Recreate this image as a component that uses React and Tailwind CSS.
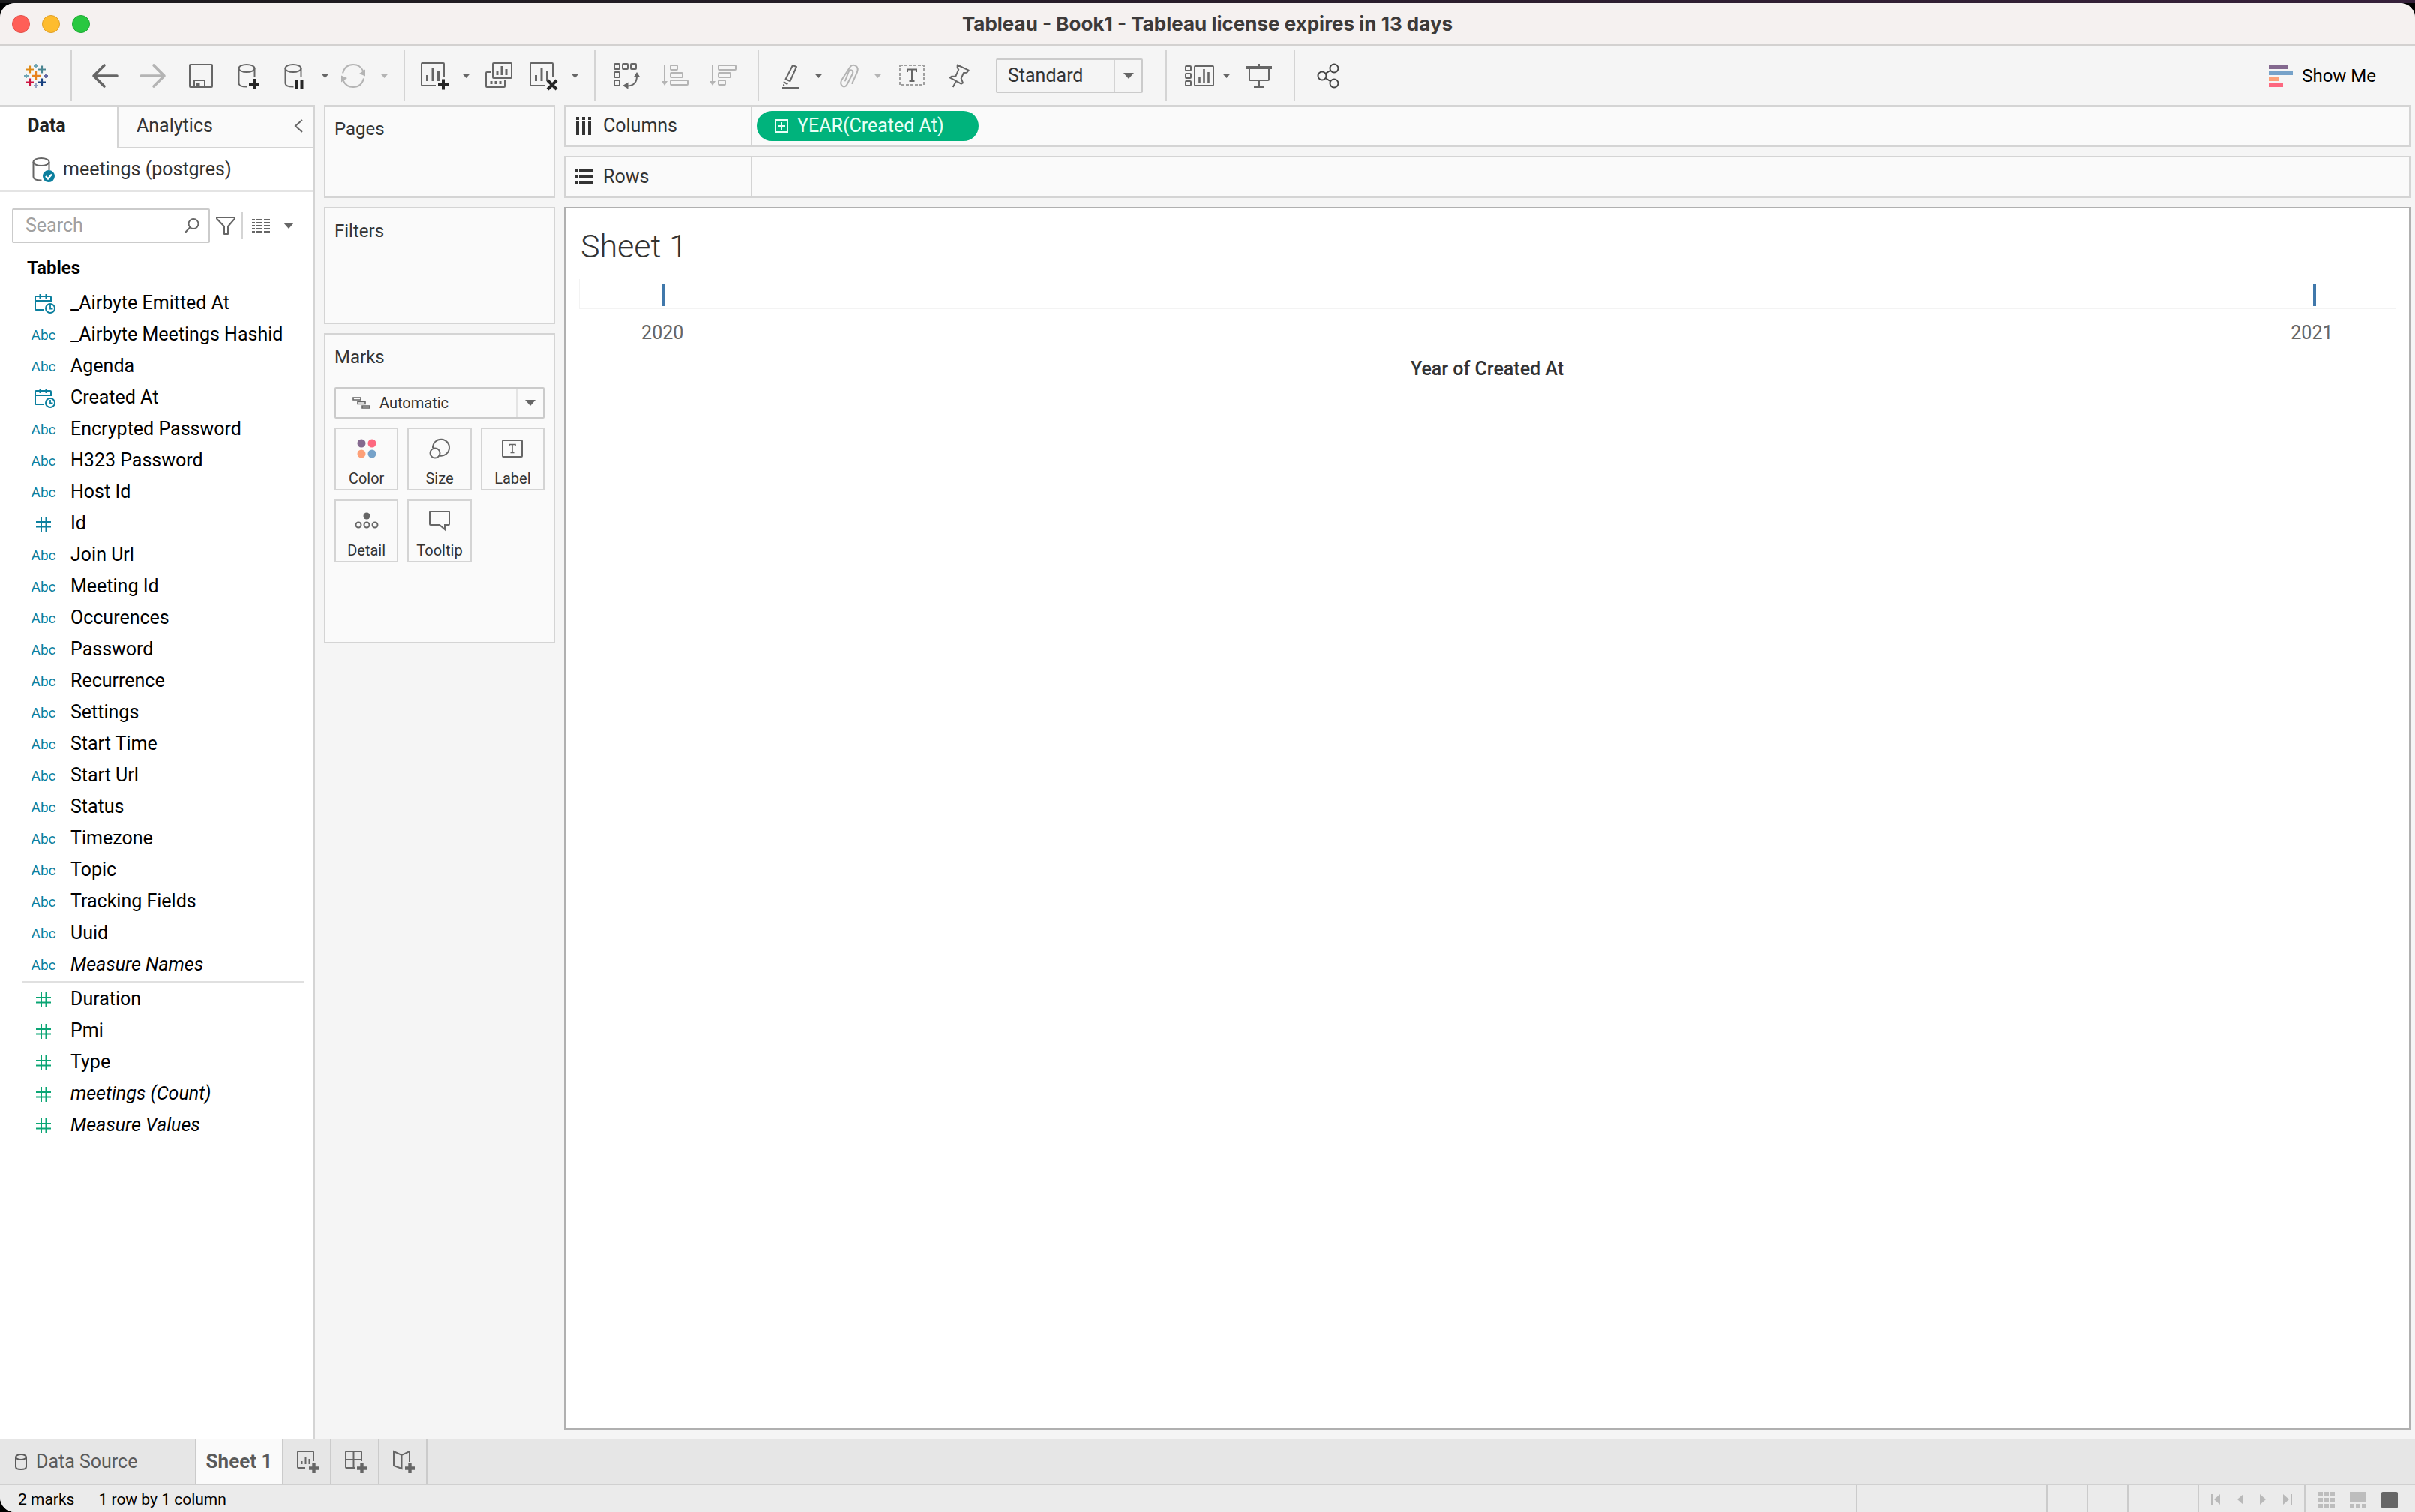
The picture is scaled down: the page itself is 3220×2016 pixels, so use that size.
import React from 'react';

const DIMENSIONS = [
  { name: '_Airbyte Emitted At', type: 'date' },
  { name: '_Airbyte Meetings Hashid', type: 'text' },
  { name: 'Agenda', type: 'text' },
  { name: 'Created At', type: 'date' },
  { name: 'Encrypted Password', type: 'text' },
  { name: 'H323 Password', type: 'text' },
  { name: 'Host Id', type: 'text' },
  { name: 'Id', type: 'number' },
  { name: 'Join Url', type: 'text' },
  { name: 'Meeting Id', type: 'text' },
  { name: 'Occurences', type: 'text' },
  { name: 'Password', type: 'text' },
  { name: 'Recurrence', type: 'text' },
  { name: 'Settings', type: 'text' },
  { name: 'Start Time', type: 'text' },
  { name: 'Start Url', type: 'text' },
  { name: 'Status', type: 'text' },
  { name: 'Timezone', type: 'text' },
  { name: 'Topic', type: 'text' },
  { name: 'Tracking Fields', type: 'text' },
  { name: 'Uuid', type: 'text' },
  { name: 'Measure Names', type: 'text', generated: true },
];

const MEASURES = [
  { name: 'Duration', type: 'number' },
  { name: 'Pmi', type: 'number' },
  { name: 'Type', type: 'number' },
  { name: 'meetings (Count)', type: 'number', generated: true },
  { name: 'Measure Values', type: 'number', generated: true },
];

const POINTS = [
  { year: 2020, position: 4.6 },
  { year: 2021, position: 95.55 },
];

/* ---------- icons ---------- */

const Icon = ({ children, className = 'w-9 h-9', box = '0 0 36 36' }) => (
  <svg
    viewBox={box}
    className={`shrink-0 overflow-visible ${className}`}
    fill="none"
    stroke="currentColor"
    strokeWidth="2"
    aria-hidden="true"
  >
    {children}
  </svg>
);

const Caret = ({ className = 'w-[11px] h-1.5' }) => (
  <svg viewBox="0 0 14 8" className={`shrink-0 ${className}`} fill="currentColor" aria-hidden="true">
    <path d="M0 0h14L7 8z" />
  </svg>
);

const LogoIcon = () => (
  <Icon>
    <path stroke="#e8821e" strokeWidth="2.4" d="M18 12v12M12 18h12" />
    <path stroke="#dd8a17" strokeWidth="2.2" d="M10 4.5v10M5 9.5h10" />
    <path stroke="#4a8591" strokeWidth="2.2" d="M26 4.5v10M21 9.5h10" />
    <path stroke="#cc1542" strokeWidth="2.2" d="M10 21.5v10M5 26.5h10" />
    <path stroke="#17407f" strokeWidth="2.2" d="M26 21.5v10M21 26.5h10" />
    <path stroke="#6fa6b4" strokeWidth="1.8" d="M18 2v6M15 5h6M5 15v6M2 18h6" />
    <path stroke="#6468a4" strokeWidth="1.8" d="M31 15v6M28 18h6" />
    <path stroke="#8d9bc0" strokeWidth="1.8" d="M18 28v6M15 31h6" />
  </Icon>
);

const BackIcon = () => (
  <Icon>
    <path strokeWidth="3.6" strokeLinecap="round" strokeLinejoin="round" d="M17 4L3 18l14 14M3.5 18H34" />
  </Icon>
);

const ForwardIcon = () => (
  <Icon>
    <path strokeWidth="3.6" strokeLinecap="round" strokeLinejoin="round" d="M19 4l14 14-14 14M32.5 18H2" />
  </Icon>
);

const SaveIcon = () => (
  <Icon>
    <rect x="3" y="3" width="30" height="30" rx="1" />
    <path d="M9 33V24h14v9" />
    <rect x="12" y="27" width="4.5" height="6" fill="currentColor" stroke="none" />
  </Icon>
);

const Cylinder = () => (
  <>
    <ellipse cx="15" cy="8" rx="10.5" ry="5" />
    <path d="M4.5 8v20c0 3 4 4.6 11 4.6M25.5 8v11" />
  </>
);

const DatabaseAddIcon = () => (
  <Icon>
    <Cylinder />
    <path stroke="#262626" strokeWidth="4" d="M25 22v14M18 29h14" />
  </Icon>
);

const DatabasePauseIcon = () => (
  <Icon>
    <g transform="translate(-2 0)">
      <Cylinder />
    </g>
    <path stroke="#262626" strokeWidth="4" d="M18 23v13M24.5 23v13" />
  </Icon>
);

const RefreshIcon = () => (
  <Icon>
    <path d="M4 14.5C6 7 11 3 18 3c6 0 11 3.5 13.5 9M32 21.5C30 29 25 33 18 33c-6 0-11-3.5-13.5-9" />
    <path fill="currentColor" stroke="none" d="M34 9.5v9l-8-3.5zM2 26.5v-9l8 3.5z" />
  </Icon>
);

const SheetBars = () => (
  <>
    <path strokeWidth="3" d="M9.5 17v8M17 7v18M24.5 11v14" />
    <path d="M21 31H3a1 1 0 0 1-1-1V2a1 1 0 0 1 1-1h28a1 1 0 0 1 1 1v17" />
  </>
);

const NewSheetIcon = () => (
  <Icon>
    <SheetBars />
    <path stroke="#262626" strokeWidth="4" d="M31 22.5v14M24 29.5h14" />
  </Icon>
);

const DuplicateIcon = () => (
  <Icon>
    <rect x="10" y="1" width="25" height="20" rx="1" />
    <path strokeWidth="3" d="M16 11v6M22 5v12M28 9v8M8 25v4M14 25v4M20 25v4" />
    <path d="M7 13H2a1 1 0 0 0-1 1v18a1 1 0 0 0 1 1h23a1 1 0 0 0 1-1v-8" />
  </Icon>
);

const ClearSheetIcon = () => (
  <Icon>
    <SheetBars />
    <path stroke="#262626" strokeWidth="4" d="M25 24l12 12M37 24L25 36" />
  </Icon>
);

const SwapIcon = () => (
  <Icon>
    <rect x="1" y="2" width="7" height="7" rx="1" />
    <rect x="12" y="2" width="7" height="7" rx="1" />
    <rect x="23" y="2" width="7" height="7" rx="1" />
    <rect x="1" y="13" width="7" height="7" rx="1" />
    <rect x="1" y="24" width="7" height="7" rx="1" />
    <path d="M31 18c0 8-4 13-12 13.5" />
    <path fill="currentColor" stroke="none" d="M31 13l4.5 7h-9zM12 31l7.5-4.5v9z" />
  </Icon>
);

const SortAscIcon = () => (
  <Icon>
    <path d="M4 3v23" />
    <path fill="currentColor" stroke="none" d="M0 25h8l-4 6z" />
    <rect x="12" y="4" width="9" height="6" rx="1" />
    <rect x="12" y="14" width="16" height="6" rx="1" />
    <rect x="12" y="24" width="23" height="6" rx="1" />
  </Icon>
);

const SortDescIcon = () => (
  <Icon>
    <path d="M4 3v23" />
    <path fill="currentColor" stroke="none" d="M0 25h8l-4 6z" />
    <rect x="12" y="4" width="23" height="6" rx="1" />
    <rect x="12" y="14" width="16" height="6" rx="1" />
    <rect x="12" y="24" width="9" height="6" rx="1" />
  </Icon>
);

const HighlightIcon = () => (
  <Icon>
    <path strokeLinejoin="round" d="M19 4l5 2-8.500 19-6-2.500z" />
    <path fill="currentColor" stroke="none" d="M7 25l6 3.500-1.500 1.500-5-3zM6 29l3.500 2.500H6z" />
    <path strokeWidth="3" d="M5 34.5h22" />
  </Icon>
);

const ClipIcon = () => (
  <Icon>
    <path
      strokeLinecap="round"
      d="M19.3 28L26 13c3-8-6-13-10-6L5 24c-3 8 5 11 7.500 5.500L20 15c1.500-5-4-6.500-5.500-2L10 24.500"
    />
  </Icon>
);

const TextBoxIcon = () => (
  <Icon>
    <rect x="2" y="4" width="32" height="26" strokeDasharray="4 2" stroke="#a0a0a0" />
    <path d="M12 13V9.500h12V13M18 9.500v15M14.500 25h7" />
  </Icon>
);

const PinIcon = () => (
  <Icon>
    <path
      strokeLinejoin="round"
      d="M14.7 3.500l15 7.200-2.400 3-4.300.3-3.300 7.300 2.300 6-2.300 1.400-15-8.400 2.600-1.600h5l4-9-1.600-2.400zM13 25l-4.300 8"
    />
  </Icon>
);

const CardsIcon = () => (
  <Icon className="w-10 h-9" box="0 0 40 36">
    <rect x="1" y="5" width="7" height="6" rx="1" />
    <rect x="1" y="15" width="7" height="6" rx="1" />
    <rect x="1" y="25" width="7" height="6" rx="1" />
    <rect x="13" y="5" width="25" height="26" rx="1" />
    <path strokeWidth="2.6" d="M19.5 19v8M25.5 9v18M31.5 13v14" />
  </Icon>
);

const PresentIcon = () => (
  <Icon>
    <path strokeWidth="4" d="M1 7h34" />
    <path d="M18 2v4M5 8v15a1 1 0 0 0 1 1h24a1 1 0 0 0 1-1V8M18 24v9M11 33h14" />
  </Icon>
);

const ShareIcon = () => (
  <Icon>
    <g stroke="#444">
      <circle cx="10" cy="18" r="5.5" />
      <circle cx="26" cy="8" r="5.5" />
      <circle cx="26" cy="28" r="5.5" />
      <path d="M14.5 15l7-4.500M14.5 21l7 4.500" />
    </g>
  </Icon>
);

const ShowMeIcon = () => (
  <Icon className="w-8 h-[30px]" box="0 0 32 30">
    <g stroke="none">
      <path fill="#84698f" d="M0 0h25v6H0z" />
      <path fill="#76a2c9" d="M0 8h32v6H0z" />
      <path fill="#fda078" d="M0 16h13v6H0z" />
      <path fill="#fd6880" d="M0 24h19v6H0z" />
    </g>
  </Icon>
);

const DateIcon = () => (
  <Icon className="mt-1 ml-1 w-7 h-7" box="0 0 28 28">
    <path d="M12 21H2a1 1 0 0 1-1-1V4a1 1 0 0 1 1-1h19a1 1 0 0 1 1 1v5H1M7.5 0v6M15.5 0v6" />
    <circle cx="21" cy="19" r="6" />
    <path strokeWidth="1.8" d="M21 15v4.500h3.500" />
  </Icon>
);

const NumberIcon = () => (
  <Icon className="mt-0.5 w-5 h-5" box="0 0 20 20">
    <path d="M7 0v20M13.5 0v20M0 7h20M0 13.5h20" />
  </Icon>
);

const FieldIcon = ({ type }) => {
  if (type === 'date') return <DateIcon />;
  if (type === 'number') return <NumberIcon />;
  return <span className="mt-0.5 text-[19px]">Abc</span>;
};

/* ---------- shared pieces ---------- */

const Tool = ({ label, children, className = '', faded }) => (
  <button
    type="button"
    aria-label={label}
    className={`flex shrink-0 items-center ${faded ? 'text-[#b4b4b4]' : 'text-[#666]'} ${className}`}
  >
    {children}
  </button>
);

const Group = ({ children }) => (
  <div className="flex shrink-0 items-center border-r-2 border-[#d4d4d4]">{children}</div>
);

const Card = ({ title, children, className }) => (
  <section className={`border-2 border-[#d4d4d4] bg-[#fafafa] px-3 pt-3 ${className}`}>
    <h2 className="text-[24px] leading-9 text-[#333]">{title}</h2>
    {children}
  </section>
);

const TitleBar = () => (
  <header className="flex h-[57px] items-center border-b-2 border-[#d3d1d0] bg-[#f5f1f0] px-4">
    <div className="flex w-40 gap-4">
      <button type="button" aria-label="Close" className="h-6 w-6 rounded-full border border-[#e2514b] bg-[#ff5f57]" />
      <button type="button" aria-label="Minimize" className="h-6 w-6 rounded-full border border-[#e0a029] bg-[#febc2e]" />
      <button type="button" aria-label="Zoom" className="h-6 w-6 rounded-full border border-[#1faa35] bg-[#28c840]" />
    </div>
    <h1 className="flex-1 text-center font-[Inter,sans-serif] text-[26px] font-bold text-[#3d3a39]">
      Tableau - Book1 - Tableau license expires in 13 days
    </h1>
    <div className="w-40" />
  </header>
);

const Toolbar = () => (
  <nav className="flex h-[79px] py-1.5">
    <Group>
      <Tool label="Start page" className="ml-7.5 mr-7"><LogoIcon /></Tool>
    </Group>
    <Group>
      <Tool label="Undo" className="ml-6.5"><BackIcon /></Tool>
      <Tool label="Redo" className="ml-7" faded><ForwardIcon /></Tool>
      <Tool label="Save" className="ml-7"><SaveIcon /></Tool>
      <Tool label="New data source" className="ml-7"><DatabaseAddIcon /></Tool>
      <Tool label="Pause updates" className="ml-7"><DatabasePauseIcon /></Tool>
      <Tool label="Update options" className="ml-3.5"><Caret /></Tool>
      <Tool label="Run update" className="ml-3.5" faded><RefreshIcon /></Tool>
      <Tool label="Run options" className="ml-4.5 mr-5" faded><Caret /></Tool>
    </Group>
    <Group>
      <Tool label="New worksheet" className="ml-5"><NewSheetIcon /></Tool>
      <Tool label="New options" className="ml-5"><Caret /></Tool>
      <Tool label="Duplicate" className="ml-5"><DuplicateIcon /></Tool>
      <Tool label="Clear sheet" className="ml-5.5"><ClearSheetIcon /></Tool>
      <Tool label="Clear options" className="ml-5 mr-5"><Caret /></Tool>
    </Group>
    <Group>
      <Tool label="Swap rows and columns" className="ml-6"><SwapIcon /></Tool>
      <Tool label="Sort ascending" className="ml-7" faded><SortAscIcon /></Tool>
      <Tool label="Sort descending" className="ml-7 mr-7" faded><SortDescIcon /></Tool>
    </Group>
    <Group>
      <Tool label="Highlight" className="ml-6.5"><HighlightIcon /></Tool>
      <Tool label="Highlight options" className="ml-3"><Caret /></Tool>
      <Tool label="Group members" className="ml-5" faded><ClipIcon /></Tool>
      <Tool label="Group options" className="ml-3" faded><Caret /></Tool>
      <Tool label="Show mark labels" className="ml-5.5"><TextBoxIcon /></Tool>
      <Tool label="Fix axes" className="ml-7"><PinIcon /></Tool>
      <div className="ml-7.5 mr-7.5 flex h-[46px] w-[196px] rounded-xs border-2 border-[#cbcbcb] text-[#666]">
        <select aria-label="Fit" className="min-w-0 flex-1 appearance-none pl-3.5 text-[25px] text-[#333]">
          <option>Standard</option>
        </select>
        <span className="flex w-9 items-center justify-center border-l border-[#d4d4d4]">
          <Caret className="w-3.5 h-2" />
        </span>
      </div>
    </Group>
    <Group>
      <Tool label="Show cards" className="ml-6"><CardsIcon /></Tool>
      <Tool label="Card options" className="ml-2.5"><Caret /></Tool>
      <Tool label="Presentation mode" className="ml-5 mr-7"><PresentIcon /></Tool>
    </Group>
    <Tool label="Share" className="ml-6.5"><ShareIcon /></Tool>
    <button type="button" className="ml-auto mr-[52px] flex items-center gap-3 text-[24px] text-black">
      <ShowMeIcon />
      Show Me
    </button>
  </nav>
);

const FieldRow = ({ field, color }) => (
  <li className="flex h-[42px] items-center">
    <span className={`flex w-8 justify-center ${color}`}>
      <FieldIcon type={field.type} />
    </span>
    <span className={`ml-5 text-[25px] whitespace-nowrap text-black ${field.generated ? 'italic' : ''}`}>
      {field.name}
    </span>
  </li>
);

const DataPane = () => (
  <aside className="w-[420px] shrink-0 border-t-2 border-r-2 border-[#d4d4d4] bg-white">
    <div className="flex h-14">
      <button type="button" className="w-[156px] pr-8 pb-1 text-center text-[25px] font-bold text-[#222]">Data</button>
      <div className="flex flex-1 items-center justify-between border-b-2 border-l-2 border-[#d4d4d4] bg-[#fafafa] pr-3.5 pb-0.5 pl-6">
        <button type="button" className="text-[25px] text-[#333]">Analytics</button>
        <button type="button" aria-label="Collapse pane" className="text-[#666]">
          <Icon className="w-3 h-[18px]" box="0 0 12 18"><path d="M11 1L2 9l9 8" /></Icon>
        </button>
      </div>
    </div>

    <button type="button" className="flex h-[58px] w-full items-center gap-2 border-b-2 border-[#e4e4e4] pl-10 text-[25px] text-[#333]">
      <span className="text-[#666]">
        <Icon>
          <Cylinder />
          <circle cx="25" cy="27" r="8" fill="#0b7f9e" stroke="none" />
          <path stroke="#fff" strokeWidth="2.4" d="M21 27l3 3.500 5-6" />
        </Icon>
      </span>
      meetings (postgres)
    </button>

    <div className="mt-[22px] flex items-center pl-4 text-[#666]">
      <label className="flex h-[46px] w-[264px] items-center rounded-xs border-2 border-[#cbcbcb] pr-3 pl-4">
        <input
          type="text"
          aria-label="Search"
          placeholder="Search"
          className="min-w-0 flex-1 text-[25px] placeholder:text-[#a0a0a0] focus:outline-none"
        />
        <Icon className="w-5 h-5" box="0 0 20 20">
          <circle cx="12" cy="7.5" r="6.5" />
          <path d="M7.5 12L1 19" />
        </Icon>
      </label>
      <button type="button" aria-label="Filter fields" className="ml-2">
        <Icon className="w-[26px] h-6" box="0 0 26 24">
          <path strokeLinejoin="round" d="M1 1h24v1.500L16 13v10h-5V13L1 2.500z" />
        </Icon>
      </button>
      <span className="ml-2 h-9 border-l-2 border-[#d4d4d4]" />
      <button type="button" aria-label="View as" className="ml-3 flex items-center gap-[18px]">
        <Icon className="w-6 h-5" box="0 0 24 20">
          <path d="M0 2h4M6 2h8M16 2h8M0 6h4M6 6h8M16 6h8M0 10h4M6 10h8M16 10h8M0 14h4M6 14h8M16 14h8M0 18h4M6 18h8M16 18h8" />
        </Icon>
        <Caret className="w-3.5 h-2" />
      </button>
    </div>

    <h2 className="mt-[17px] pl-9 text-[24px] leading-8 font-bold text-black">Tables</h2>
    <ul className="mt-2.5 pl-[42px]">
      {DIMENSIONS.map((field) => (
        <FieldRow key={field.name} field={field} color="text-[#0b7f9e]" />
      ))}
    </ul>
    <hr className="my-px mr-3 ml-[30px] border-t-2 border-[#e0e0e0]" />
    <ul className="pl-[42px]">
      {MEASURES.map((field) => (
        <FieldRow key={field.name} field={field} color="text-[#0aa574]" />
      ))}
    </ul>
  </aside>
);

const MarkButton = ({ label, children }) => (
  <button
    type="button"
    className="flex h-[84px] flex-col items-center justify-between border-2 border-[#d4d4d4] pt-3 pb-0.5 text-[#666]"
  >
    {children}
    <span className="text-[20px] leading-6 text-[#333]">{label}</span>
  </button>
);

const MarksCard = () => (
  <Card title="Marks" className="h-[414px]">
    <div className="mt-[22px] flex h-[42px] items-center rounded-xs border-2 border-[#cbcbcb] text-[#666]">
      <Icon className="ml-[22px] w-6 h-4" box="0 0 24 16">
        <path strokeWidth="1.6" d="M1 1h10v3H1zM7 6.500h10v3H7zM13 12h10v3H13z" />
      </Icon>
      <select aria-label="Mark type" className="min-w-0 flex-1 appearance-none pl-3 text-[20px] text-[#333]">
        <option>Automatic</option>
      </select>
      <span className="flex w-9 items-center justify-center self-stretch border-l-2 border-[#e4e4e4]">
        <Caret className="w-3.5 h-2" />
      </span>
    </div>
    <div className="mt-3 grid grid-cols-3 gap-3">
      <MarkButton label="Color">
        <Icon className="w-7 h-7" box="0 0 28 28">
          <g stroke="none">
            <circle cx="7" cy="7" r="5.5" fill="#84698f" />
            <circle cx="21" cy="7" r="5.5" fill="#fd6880" />
            <circle cx="7" cy="21" r="5.5" fill="#fda078" />
            <circle cx="21" cy="21" r="5.5" fill="#76a2c9" />
          </g>
        </Icon>
      </MarkButton>
      <MarkButton label="Size">
        <Icon className="w-7 h-7" box="0 0 28 28">
          <path d="M5 13A11 11 0 1 1 14 23.500" />
          <circle cx="8" cy="20" r="6.5" />
        </Icon>
      </MarkButton>
      <MarkButton label="Label">
        <Icon className="w-7 h-7" box="0 0 28 28">
          <rect x="1" y="3" width="26" height="22" rx="1" />
          <path strokeWidth="1.6" d="M10 11V8.500h8V11M14 8.500v11M11.500 19.500h5" />
        </Icon>
      </MarkButton>
      <MarkButton label="Detail">
        <Icon className="w-8 h-7" box="0 0 32 28">
          <circle cx="16" cy="8" r="4.5" fill="currentColor" stroke="none" />
          <circle cx="5" cy="20" r="3.5" />
          <circle cx="16" cy="20" r="3.5" />
          <circle cx="27" cy="20" r="3.5" />
        </Icon>
      </MarkButton>
      <MarkButton label="Tooltip">
        <Icon className="w-7 h-7" box="0 0 28 28">
          <path d="M2 2h24a1 1 0 0 1 1 1v16a1 1 0 0 1-1 1h-5v6l-7-6H2a1 1 0 0 1-1-1V3a1 1 0 0 1 1-1z" />
        </Icon>
      </MarkButton>
    </div>
  </Card>
);

const Shelf = ({ label, icon, children }) => (
  <div className="flex h-14 border-2 border-[#d4d4d4] bg-[#fafafa]">
    <div className="flex w-[249px] items-center gap-3.5 border-r-2 border-[#d4d4d4] pl-3 text-[25px] text-[#333]">
      {icon}
      {label}
    </div>
    <div className="flex flex-1 items-center pl-1.5">{children}</div>
  </div>
);

const Worksheet = () => (
  <section className="flex-1 border-2 border-[#b0b0b0] bg-white px-[18px] pt-6">
    <h2 className="pl-0.5 text-[43px] leading-[52px] font-light text-[#333]">Sheet 1</h2>
    <div className="relative mt-4.5 h-10 border-b-2 border-l border-[#f3f3f3]">
      {POINTS.map((point) => (
        <span
          key={point.year}
          className="absolute top-1.5 h-[30px] w-1 -translate-x-1/2 bg-[#4078ab]"
          style={{ left: `${point.position}%` }}
        />
      ))}
    </div>
    <div className="relative mt-4 mr-1 h-8">
      {POINTS.map((point) => (
        <span
          key={point.year}
          className="absolute -translate-x-1/2 text-[25px] leading-8 text-[#666]"
          style={{ left: `${point.position}%` }}
        >
          {point.year}
        </span>
      ))}
    </div>
    <p className="mt-4 text-center text-[25px] leading-8 font-medium text-[#333]">Year of Created At</p>
  </section>
);

const SheetTabs = () => (
  <div className="flex h-[62px] border-t border-b-2 border-t-[#c8c8c8] border-b-[#d0d0d0] bg-[#e6e6e6] text-[#666]">
    <button type="button" className="flex w-[260px] items-center gap-3 pl-5 text-[25px] text-[#5a5a5a]">
      <Icon className="w-4 h-[22px]" box="0 0 16 22">
        <ellipse cx="8" cy="4.5" rx="7" ry="3.5" />
        <path d="M1 4.500v13c0 4.700 14 4.700 14 0v-13" />
      </Icon>
      Data Source
    </button>
    <button type="button" className="w-[118px] border-x-2 border-[#cbcbcb] bg-[#fafafa] text-[26px] font-bold text-[#5a5a5a]">
      Sheet 1
    </button>
    <button type="button" aria-label="New worksheet" className="flex w-16 items-center justify-center border-r-2 border-[#cbcbcb] pl-1">
      <Icon className="w-[30px] h-[30px]" box="0 0 30 30">
        <path d="M11 23H2a1 1 0 0 1-1-1V2a1 1 0 0 1 1-1h19a1 1 0 0 1 1 1v12M6.500 14v4M11.500 8v10M16.500 11v7" />
        <path strokeWidth="4.4" d="M22.5 17v13M16 23.500h13" />
      </Icon>
    </button>
    <button type="button" aria-label="New dashboard" className="flex w-16 items-center justify-center border-r-2 border-[#cbcbcb] pl-1">
      <Icon className="w-[30px] h-[30px]" box="0 0 30 30">
        <path d="M13 23H2a1 1 0 0 1-1-1V2a1 1 0 0 1 1-1h19a1 1 0 0 1 1 1v12M1 12h21M11.500 1v22" />
        <path strokeWidth="4.4" d="M22.5 17v13M16 23.500h13" />
      </Icon>
    </button>
    <button type="button" aria-label="New story" className="flex w-16 items-center justify-center border-r-2 border-[#cbcbcb] pl-1">
      <Icon className="w-[30px] h-[30px]" box="0 0 30 30">
        <path d="M22 15V1L11.500 6 1 1v19l10.500 4V6" />
        <path strokeWidth="4.4" d="M22.5 17v13M16 23.500h13" />
      </Icon>
    </button>
  </div>
);

const StatusBar = () => (
  <footer className="flex h-9 bg-[#ebebeb] text-[21px] text-black">
    <p className="flex flex-1 items-center gap-8 pt-1 pl-6">
      <span>2 marks</span>
      <span>1 row by 1 column</span>
    </p>
    <div className="w-[254px] border-l-2 border-[#cbcbcb]" />
    <div className="w-[54px] border-l-2 border-[#cbcbcb]" />
    <div className="w-[54px] border-l-2 border-[#cbcbcb]" />
    <div className="w-[94px] border-l-2 border-[#cbcbcb]" />
    <div className="flex w-[142px] items-center justify-between border-l-2 border-[#cbcbcb] px-4 pt-0.5 text-[#b9b9b9]">
      <button type="button" aria-label="First">
        <Icon className="w-3 h-3.5" box="0 0 12 14"><path d="M1 0v14" /><path fill="currentColor" stroke="none" d="M12 0v14L4 7z" /></Icon>
      </button>
      <button type="button" aria-label="Previous">
        <Icon className="w-2 h-3.5" box="0 0 8 14"><path fill="currentColor" stroke="none" d="M8 0v14L0 7z" /></Icon>
      </button>
      <button type="button" aria-label="Next">
        <Icon className="w-2 h-3.5" box="0 0 8 14"><path fill="currentColor" stroke="none" d="M0 0v14l8-7z" /></Icon>
      </button>
      <button type="button" aria-label="Last">
        <Icon className="w-3 h-3.5" box="0 0 12 14"><path d="M11 0v14" /><path fill="currentColor" stroke="none" d="M0 0v14l8-7z" /></Icon>
      </button>
    </div>
    <div className="flex w-[148px] items-center gap-5 border-l-2 border-[#cbcbcb] pt-1 pl-[17px] text-[#bdbdbd]">
      <button type="button" aria-label="Sheet sorter">
        <Icon className="w-[22px] h-[22px]" box="0 0 22 22">
          <path strokeWidth="6" strokeDasharray="6 2" d="M0 3h22M0 11h22M0 19h22" />
        </Icon>
      </button>
      <button type="button" aria-label="Filmstrip">
        <Icon className="w-[22px] h-[22px]" box="0 0 22 22">
          <path fill="currentColor" stroke="none" d="M0 0h22v14H0z" />
          <path strokeWidth="6" strokeDasharray="6 2" d="M0 19h22" />
        </Icon>
      </button>
      <button type="button" aria-label="Tabs view" className="h-[22px] w-[22px] rounded-xs bg-[#666]" />
    </div>
  </footer>
);

const App = () => (
  <div className="min-h-screen bg-black font-[Roboto,'Liberation_Sans',sans-serif]">
    <div className="h-1 bg-linear-to-r from-[#1c1b1d] to-[#36203a]" />
    <div className="flex min-h-[calc(100vh-4px)] flex-col overflow-hidden rounded-t-[20px] rounded-bl-[20px] bg-[#f5f5f5]">
      <TitleBar />
      <Toolbar />
      <div className="flex flex-1">
        <DataPane />
        <div className="ml-3 flex w-[308px] shrink-0 flex-col gap-3">
          <Card title="Pages" className="h-[124px]" />
          <Card title="Filters" className="h-[156px]" />
          <MarksCard />
        </div>
        <main className="mr-1.5 mb-3 ml-3 flex flex-1 flex-col gap-3">
          <Shelf
            label="Columns"
            icon={
              <Icon className="w-6 h-6" box="0 0 24 24">
                <path strokeWidth="4" d="M4 0v4M12 0v4M20 0v4M4 6v18M12 6v18M20 6v18" />
              </Icon>
            }
          >
            <button type="button" className="flex h-10 w-[296px] items-center gap-3 rounded-full bg-[#00b37c] pl-6 text-[25px] text-[#e8fff6]">
              <Icon className="w-[18px] h-[18px]" box="0 0 18 18">
                <rect x="1" y="1" width="16" height="16" />
                <path d="M9 4v10M4 9h10" />
              </Icon>
              YEAR(Created At)
            </button>
          </Shelf>
          <Shelf
            label="Rows"
            icon={
              <Icon className="w-6 h-5" box="0 0 24 20">
                <path strokeWidth="4" d="M0 2h4M0 10h4M0 18h4M6 2h18M6 10h18M6 18h18" />
              </Icon>
            }
          />
          <Worksheet />
        </main>
      </div>
      <SheetTabs />
      <StatusBar />
    </div>
  </div>
);

export default App;
